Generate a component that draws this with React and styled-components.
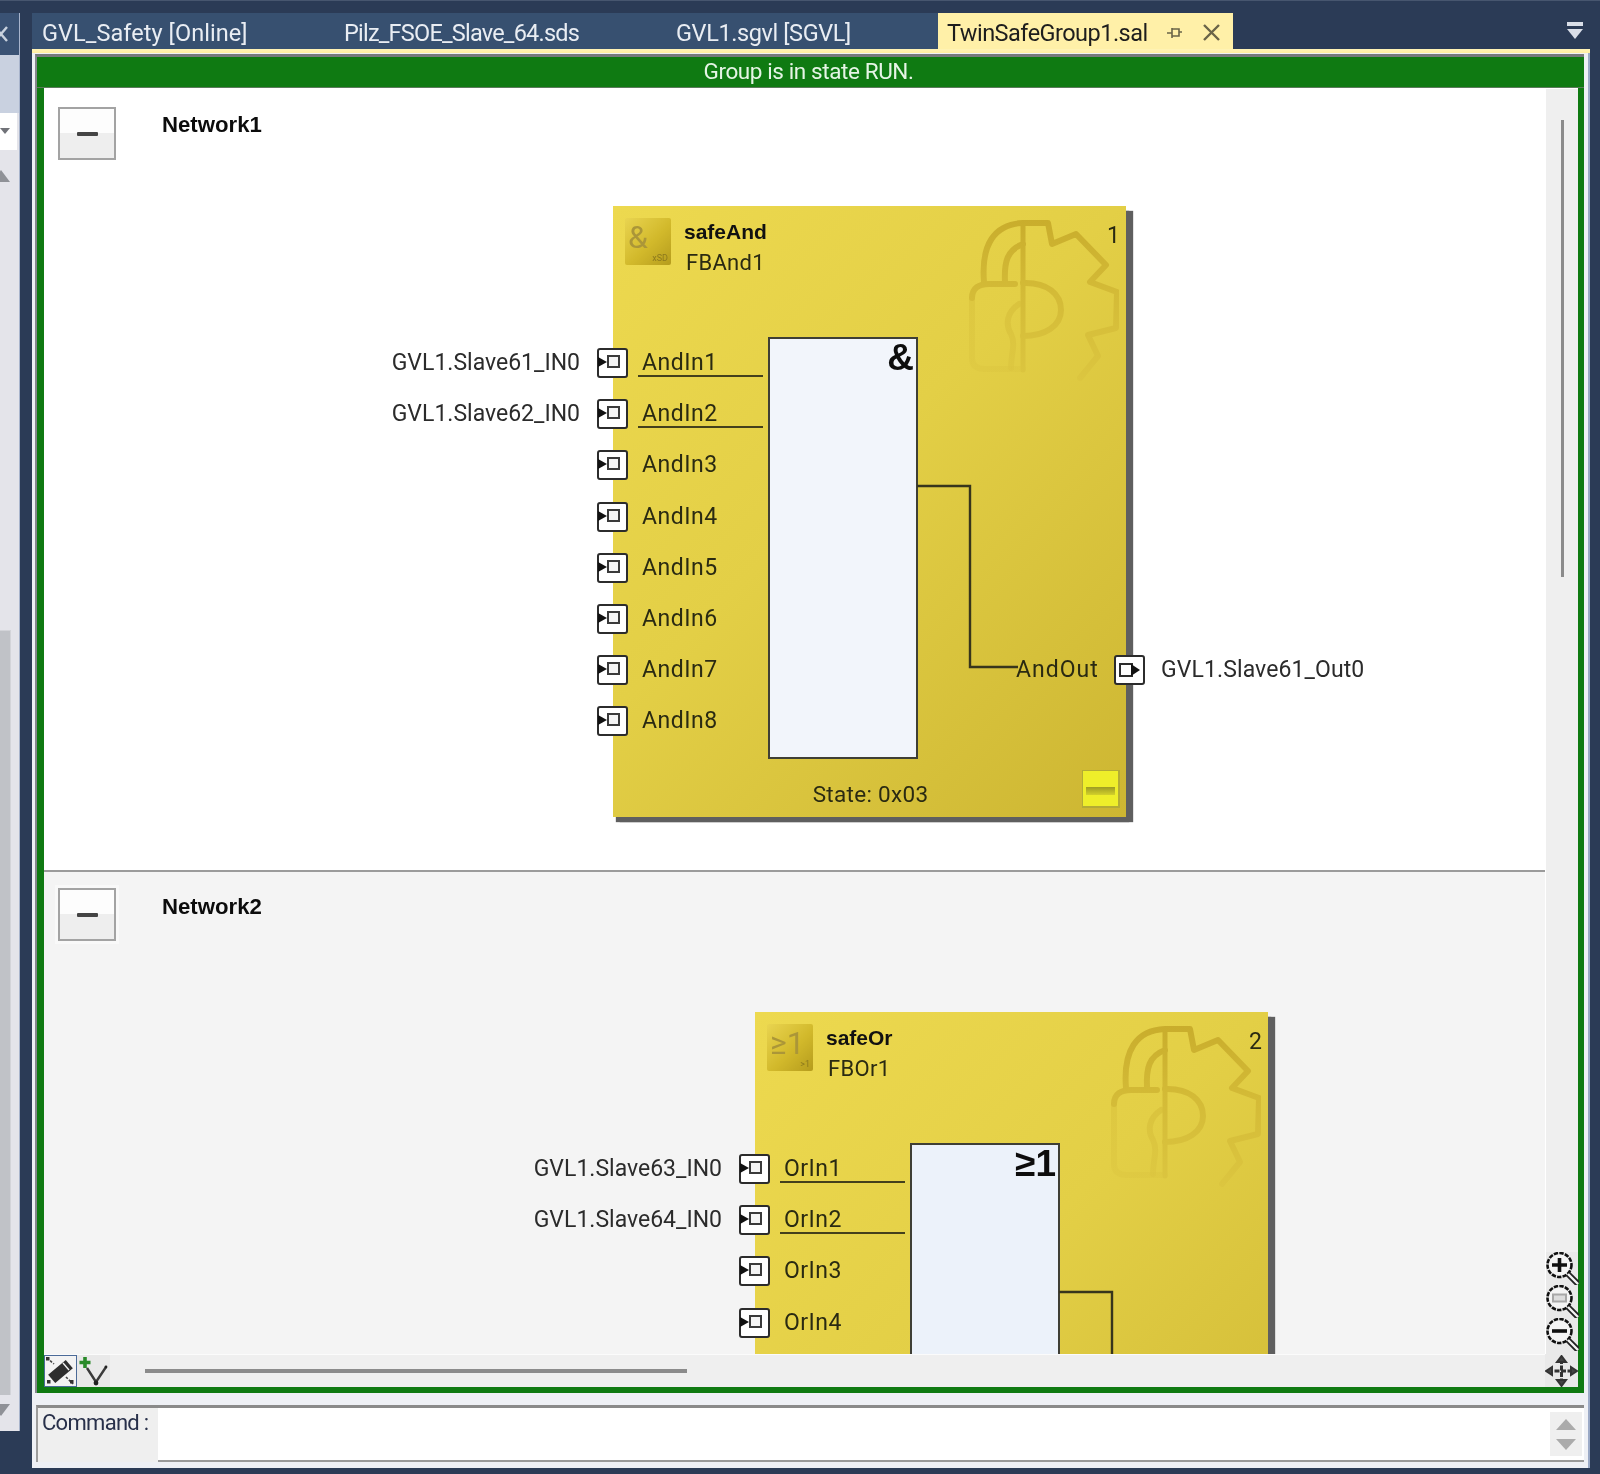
import React from 'react';
import styled, { createGlobalStyle } from 'styled-components';

const GlobalStyle = createGlobalStyle`
  html, body {
    margin: 0;
    padding: 0;
    background: #2b3b56;
  }
  body {
    font-family: Roboto, "Liberation Sans", sans-serif;
  }
`;

const Page = styled.div`
  width: 1600px;
  height: 1474px;
  overflow: hidden;
  background: #2b3b56;
  padding: 12px 10px 6px 0;
  box-sizing: border-box;
  display: grid;
  grid-template-columns: 20px 1fr;
  column-gap: 12px;
  border-top: 1px solid #47566f;
  filter: blur(0.55px);
`;

/* left tool window, only a sliver of it is visible */
const Sidebar = styled.aside`
  height: 1418px;
  display: flex;
  flex-direction: column;
  background: #e4e4ea;
  border-right: 1px solid #a8b4cc;
  box-sizing: border-box;
  overflow: hidden;
`;

const SidebarHead = styled.div`
  height: 42px;
  flex: none;
  background: #3a5274;
  display: flex;
  align-items: center;
`;

const SidebarUpper = styled.div`
  height: 58px;
  flex: none;
  background: #c9d1e0;
`;

const SidebarCombo = styled.div`
  margin-right: 2px;
  height: 37px;
  flex: none;
  background: #fff;
  padding-top: 15px;
  box-sizing: border-box;
`;

const Arrow = styled.div`
  width: 0;
  height: 0;
  flex: none;
  margin: ${(p) => p.$margin || '0'};
  border-left: ${(p) => p.$w}px solid transparent;
  border-right: ${(p) => p.$w}px solid transparent;
  ${(p) => (p.$down ? `border-top: ${p.$h}px solid ${p.$color};` : `border-bottom: ${p.$h}px solid ${p.$color};`)}
`;

const SidebarTrack = styled.div`
  flex: 1;
  width: 10px;
  margin-top: 448px;
  background: #c0c2c7;
  border: solid #d3d4d9;
  border-width: 1px 1px 0 0;
  box-sizing: content-box;
`;

const Main = styled.main`
  display: flex;
  flex-direction: column;
  min-width: 0;
`;

const TabBar = styled.div`
  height: 36px;
  display: flex;
  align-items: stretch;
  position: relative;
`;

const Tab = styled.div`
  width: ${(p) => p.$width}px;
  box-sizing: border-box;
  padding: 3px 0 0 ${(p) => (p.$active ? 9 : 10)}px;
  display: flex;
  align-items: center;
  font-size: 23.5px;
  letter-spacing: ${(p) => p.$tracking}px;
  white-space: nowrap;
  color: ${(p) => (p.$active ? '#1d1d1d' : '#e9edf3')};
  background: ${(p) => (p.$active ? '#fff0a8' : '#375070')};
`;

const TabIcons = styled.span`
  display: inline-flex;
  align-items: center;
  margin-left: 19px;
  gap: 19px;
`;

const OverflowButton = styled.svg`
  position: absolute;
  right: 7px;
  top: 9px;
`;

const TabLine = styled.div`
  height: 4px;
  background: linear-gradient(#fff3b8, #ffeea0);
`;

const EditorPanel = styled.div`
  height: 1415px;
  background: #eef0f5;
  border-right: 2px solid #9aa9c6;
  padding: 1px 4px 0 3px;
  box-sizing: border-box;
  display: flex;
  flex-direction: column;
`;

const GroupFrame = styled.div`
  height: 1339px;
  flex: none;
  box-sizing: border-box;
  border-top: 3px solid #77797c;
  border-left: 2px solid #84878d;
  display: flex;
  flex-direction: column;
`;

const StateBar = styled.div`
  height: 31px;
  flex: none;
  background: #0f7a12;
  border-bottom: 1px solid #5c7a5c;
  box-sizing: border-box;
  color: #e6f5e6;
  font-size: 22.5px;
  letter-spacing: -0.4px;
  line-height: 29px;
  text-align: center;
  padding-right: 4px;
`;

const GroupBody = styled.div`
  flex: 1;
  min-height: 0;
  border: solid #0f7a12;
  border-width: 0 6px 6px 7px;
  display: grid;
  grid-template-columns: 1fr 33px;
  grid-template-rows: 1fr 33px;
  background: #efefef;
`;

const Networks = styled.div`
  overflow: hidden;
  display: flex;
  flex-direction: column;
  min-height: 0;
`;

const Network = styled.section`
  position: relative;
  flex: ${(p) => (p.$grow ? '1' : 'none')};
  height: ${(p) => (p.$height ? `${p.$height}px` : 'auto')};
  background: ${(p) => p.$bg};
  border-bottom: ${(p) => (p.$divider ? '2px solid #9b9b9b' : 'none')};
  box-sizing: border-box;
  overflow: hidden;
  display: flex;
  align-items: flex-start;
  gap: 46px;
  padding: ${(p) => p.$pad};
`;

const CollapseButton = styled.div`
  width: 58px;
  height: 53px;
  box-sizing: border-box;
  border: 2px solid #a3a3a3;
  outline: 3px solid ${(p) => (p.$halo ? '#f9f9f9' : 'transparent')};
  background: linear-gradient(#fdfdfd 0 50%, #eeeeee 50% 100%);
  display: flex;
  align-items: center;
  justify-content: center;

  &::before {
    content: '';
    width: 21px;
    height: 4px;
    border-radius: 1px;
    background: #444;
  }
`;

const NetworkTitle = styled.div`
  font-family: "Liberation Sans", sans-serif;
  font-weight: 700;
  font-size: 22.2px;
  line-height: 26px;
  color: #0c0c0c;
  margin-top: ${(p) => p.$offset}px;
`;

/* function blocks sit on the network canvas at their own coordinates */
const Block = styled.div`
  position: absolute;
  left: ${(p) => p.$x}px;
  top: ${(p) => p.$y}px;
  width: 513px;
  height: 611px;
  background: linear-gradient(135deg, #edd94f 0%, #e3cf46 45%, #cdb632 100%);
  box-shadow: 7px 5px 1px 0 #5f5f5f, 3px 5px 1px 0 #5f5f5f;
  color: #2a2a12;
`;

const Watermark = styled.svg`
  position: absolute;
  left: 356px;
  top: 14px;
`;

const BlockHead = styled.header`
  height: 131px;
  box-sizing: border-box;
  padding: 12px 0 0 12px;
  display: flex;
  gap: 13px;
`;

const TypeTile = styled.div`
  width: 46px;
  height: 47px;
  border-radius: 2px;
  background: linear-gradient(135deg, #e9d450 0%, #d2b92b 55%, #b59c1d 100%);
  color: #ab9638;
  padding: 4px 0 0 3px;
  box-sizing: border-box;
  position: relative;
`;

const TileGlyph = styled.div`
  font-size: 32px;
  line-height: 30px;
  height: 30px;
`;

const TileMark = styled.span`
  position: absolute;
  right: 3px;
  bottom: 2px;
  font-size: 9px;
  line-height: 10px;
  color: #8d7a1e;
`;

const BlockNames = styled.div`
  display: flex;
  flex-direction: column;
`;

const TypeName = styled.div`
  font-family: "Liberation Sans", sans-serif;
  font-weight: 700;
  font-size: 21px;
  line-height: 28px;
  color: #111;
`;

const InstanceName = styled.div`
  font-size: 22px;
  line-height: 28px;
  margin: 3px 0 0 2px;
  letter-spacing: 0.3px;
`;

const BlockIndex = styled.div`
  position: absolute;
  right: 6px;
  top: 16px;
  font-size: 23px;
  line-height: 28px;
`;

const BlockBody = styled.div`
  display: flex;
  align-items: flex-start;
  height: 422px;
`;

const Inputs = styled.div`
  width: 155px;
  flex: none;
  display: flex;
  flex-direction: column;
`;

const InputRow = styled.div`
  position: relative;
  height: 51.2px;
  box-sizing: border-box;
  padding-left: 29px;
  font-size: 23px;
  letter-spacing: 0.5px;
  line-height: 52px;

  ${(p) => p.$wired && `
    &::after {
      content: '';
      position: absolute;
      left: 25px;
      right: 5px;
      bottom: 11px;
      height: 2.4px;
      background: #44401c;
    }
  `}
`;

const PinHolder = styled.span`
  position: absolute;
  left: ${(p) => p.$left}px;
  top: ${(p) => p.$top}px;
  display: block;
  line-height: 0;
`;

const OuterLabel = styled.span`
  position: absolute;
  right: 188px;
  top: 0;
  white-space: nowrap;
  letter-spacing: 0;
  color: #2b2b2b;
`;

const FunctionBox = styled.div`
  width: 150px;
  height: 422px;
  flex: none;
  box-sizing: border-box;
  border: 2px solid #3f3f35;
  background: ${(p) => p.$fill};
  text-align: right;
  padding-right: 2px;
  font-family: "Liberation Sans", sans-serif;
  font-weight: 700;
  font-size: 37px;
  line-height: 38px;
  color: #0d0d0d;
`;

const Wire = styled.svg`
  position: absolute;
  left: 0;
  top: 0;
  pointer-events: none;
`;

const OutputRow = styled.div`
  position: absolute;
  left: 403px;
  top: 439px;
  font-size: 23px;
  letter-spacing: 1px;
  line-height: 50px;
  white-space: nowrap;
`;

const OutputLabel = styled.span`
  position: absolute;
  left: 145px;
  top: 0;
  letter-spacing: 0.1px;
  color: #2b2b2b;
`;

const BlockFooter = styled.div`
  margin-top: 20px;
  text-align: center;
  font-size: 22.5px;
  letter-spacing: 0.3px;
  line-height: 30px;
  padding-left: 2px;
`;

const StatusLamp = styled.div`
  position: absolute;
  right: 6px;
  bottom: 9px;
  width: 38px;
  height: 38px;
  box-sizing: border-box;
  border: 1px solid #b3ab35;
  border-width: 1px 2px 2px 1px;
  background: #eeee2a;

  &::after {
    content: '';
    position: absolute;
    left: 3px;
    right: 3px;
    top: 16px;
    height: 8px;
    background: linear-gradient(#9d9b24, #d3d12a);
  }
`;

const VerticalBar = styled.div`
  background: #efefef;
  border-top: 1px solid #fff;
  border-left: 1px solid #fff;
  display: flex;
  flex-direction: column;
  align-items: center;
  box-sizing: border-box;
`;

const ScrollThumb = styled.div`
  width: 3px;
  height: 457px;
  margin-top: 31px;
  background: #8b8b8b;
`;

const ZoomTools = styled.div`
  margin-top: auto;
  width: 100%;
  height: 102px;
  background: #e9e9e9;
  display: flex;
  flex-direction: column;
  align-items: center;
`;

const HorizontalBar = styled.div`
  background: #efefef;
  border-top: 1px solid #fbfbfb;
  display: flex;
  align-items: center;
`;

const ModeButton = styled.div`
  width: ${(p) => p.$width}px;
  height: 32px;
  flex: none;
  box-sizing: border-box;
  line-height: 0;
  background: ${(p) => (p.$selected ? '#f3f3f3' : '#e9e9e9')};
  border: ${(p) => (p.$selected ? '1px solid #4b6a98' : 'none')};
`;

const HScrollThumb = styled.div`
  width: 542px;
  height: 4px;
  margin-left: 35px;
  background: #8b8b8b;
`;

const Corner = styled.div`
  background: #e9e9e9;
  display: flex;
  align-items: center;
  justify-content: center;
`;

const CommandBox = styled.div`
  margin-top: 12px;
  height: 57px;
  flex: none;
  display: flex;
  box-sizing: border-box;
  border-top: 3px solid #8a8a8a;
  border-left: 2px solid #9c9c9c;
  margin-left: 1px;
`;

const CommandLabel = styled.label`
  width: 120px;
  flex: none;
  padding: 0 0 0 4px;
  box-sizing: border-box;
  font-size: 22px;
  letter-spacing: -0.7px;
  line-height: 29px;
  color: #28304a;
  background: #efefef;
`;

const CommandInput = styled.div`
  flex: 1;
  background: #fff;
  border-bottom: 2px solid #999;
  display: flex;
  justify-content: flex-end;
  align-items: stretch;
  padding: 4px 2px 4px 0;
`;

const CommandScroll = styled.div`
  width: 32px;
  background: #efefef;
  display: flex;
  flex-direction: column;
  align-items: center;
  justify-content: center;
  gap: 9px;
`;

const PinIn = () => (
  <svg width="31" height="30" viewBox="0 0 31 30">
    <rect x="1" y="1" width="29" height="28" rx="2" fill="#fff" stroke="#2c2c2c" strokeWidth="2" />
    <rect x="11" y="8" width="11" height="11" fill="#f4f4f4" stroke="#3a3a3a" strokeWidth="2" />
    <path d="M1 9 L10 14 L1 19 Z" fill="#111" />
  </svg>
);

const PinOut = () => (
  <svg width="31" height="30" viewBox="0 0 31 30">
    <rect x="1" y="1" width="29" height="28" rx="2" fill="#fff" stroke="#2c2c2c" strokeWidth="2" />
    <path d="M6 9 H18 V21 H6 Z" fill="#fff" stroke="#2c2c2c" strokeWidth="2" />
    <path d="M17 9 L26 15 L17 21 Z" fill="#111" />
  </svg>
);

const LockGear = () => (
  <Watermark width="150" height="164" viewBox="0 0 150 164">
    <defs>
      <linearGradient id="markFade" gradientUnits="userSpaceOnUse" x1="0" y1="0" x2="0" y2="164">
        <stop offset="0" stopColor="#c9ad2c" />
        <stop offset="0.45" stopColor="#d4bb37" />
        <stop offset="1" stopColor="#dcc640" />
      </linearGradient>
    </defs>
    <g fill="none" stroke="url(#markFade)" strokeWidth="6" strokeLinejoin="round" strokeLinecap="round">
      <path d="M15 62 C12 25 25 4 54 3 L79 3 L83 24 L107 14 L137 45 L121 62 L148 72 L147 108 L119 115 L129 136 L111 158" />
      <path d="M36 62 C35 42 38 30 54 24" />
      <path d="M54 3 V150" strokeWidth="5" />
      <path d="M3 78 C3 68 10 64 20 64 L46 64" />
      <path d="M3 78 V138 C3 146 8 149 16 149 L54 149" opacity="0.4" />
      <path d="M54 63 C78 62 92 74 92 90 C92 106 76 116 54 116" />
      <path d="M50 84 C38 92 36 104 42 114 C47 124 42 134 42 148" opacity="0.6" />
    </g>
  </Watermark>
);

const ZoomIcon = ({ kind }) => (
  <svg width="33" height="33" viewBox="0 0 33 33">
    <circle cx="13.5" cy="13" r="12" fill="#f4f4f4" stroke="#111" strokeWidth="2.6" strokeDasharray="4.4 1.2" />
    <path d="M22 22 L32 32" stroke="#222" strokeWidth="6" />
    <path d="M22 22 L32 32" stroke="#f4f4f4" strokeWidth="2.4" />
    {kind === 'in' && <path d="M6 13 H21 M13.5 6 V20" stroke="#111" strokeWidth="3.6" />}
    {kind === 'fit' && <rect x="7" y="9.5" width="13" height="7" fill="#ddd" stroke="#a8a8a8" strokeWidth="2" />}
    {kind === 'out' && <path d="M6 13 H21" stroke="#111" strokeWidth="3.6" />}
  </svg>
);

const MoveIcon = () => (
  <svg width="33" height="32" viewBox="0 0 33 32">
    <g stroke="#333" strokeWidth="2" fill="#444">
      <path d="M16.5 4 V28 M3 16 H30" fill="none" strokeWidth="3" strokeDasharray="5 1.5" />
      <path d="M16.5 1 L12 7 H21 Z" />
      <path d="M16.5 31 L12 25 H21 Z" />
      <path d="M1 16 L7 12 V20 Z" />
      <path d="M32 16 L26 12 V20 Z" />
    </g>
  </svg>
);

const EditModeIcon = () => (
  <svg width="31" height="30" viewBox="0 0 31 30">
    <rect x="4" y="10" width="23" height="11" transform="rotate(-40 15.5 15.5)" fill="#2e2e2e" />
    <path d="M18 7 L24 14" stroke="#f3f3f3" strokeWidth="1.4" />
    <path d="M2 2 L9 8 M21 21 L28 28" stroke="#444" strokeWidth="1.6" strokeDasharray="2.5 1.6" />
    <rect x="1" y="1" width="3.5" height="3.5" fill="#333" />
    <rect x="25" y="24" width="3.5" height="3.5" fill="#333" />
    <rect x="2" y="24" width="3.5" height="3.5" fill="#333" />
  </svg>
);

const AddConnectionIcon = () => (
  <svg width="33" height="32" viewBox="0 0 33 32">
    <path d="M8 2 V13 M2.5 7.5 H13.5" stroke="#2a8a2a" strokeWidth="3.6" />
    <path d="M10 13 L19 27 L29 12" fill="none" stroke="#3a3a3a" strokeWidth="2.4" />
    <circle cx="19" cy="28" r="2.4" fill="#222" />
    <circle cx="29" cy="12" r="1.4" fill="#222" />
  </svg>
);

const CloseSliver = () => (
  <svg width="8" height="18" viewBox="0 0 8 18">
    <path d="M-5 2 L7 16 M7 2 L-5 16" stroke="#c9d2df" strokeWidth="2.4" />
  </svg>
);

const FunctionBlock = ({ x, y, type, instance, tile, mark, symbol, index, fill, inputs, output }) => (
  <Block $x={x} $y={y}>
    <LockGear />
    <BlockHead>
      <TypeTile>
        <TileGlyph>{tile}</TileGlyph>
        <TileMark>{mark}</TileMark>
      </TypeTile>
      <BlockNames>
        <TypeName>{type}</TypeName>
        <InstanceName>{instance}</InstanceName>
      </BlockNames>
    </BlockHead>
    <BlockIndex>{index}</BlockIndex>
    <BlockBody>
      <Inputs>
        {inputs.map((input) => (
          <InputRow key={input.name} $wired={!!input.variable}>
            <PinHolder $left={-16} $top={11}><PinIn /></PinHolder>
            {input.variable && <OuterLabel>{input.variable}</OuterLabel>}
            {input.name}
          </InputRow>
        ))}
      </Inputs>
      <FunctionBox $fill={fill}>{symbol}</FunctionBox>
    </BlockBody>
    <Wire width="513" height="611">
      <path d="M304 280 H357 V461 H405" fill="none" stroke="#37351c" strokeWidth="2.4" />
    </Wire>
    {output && (
      <OutputRow>
        {output.name}
        <PinHolder $left={98} $top={10}><PinOut /></PinHolder>
        <OutputLabel>{output.variable}</OutputLabel>
      </OutputRow>
    )}
    {output && <BlockFooter>State: 0x03</BlockFooter>}
    <StatusLamp />
  </Block>
);

const tabs = [
  { label: 'GVL_Safety [Online]', width: 302, tracking: 0.06 },
  { label: 'Pilz_FSOE_Slave_64.sds', width: 332, tracking: -0.78 },
  { label: 'GVL1.sgvl [SGVL]', width: 272, tracking: -0.4 },
];

const andInputs = [
  { name: 'AndIn1', variable: 'GVL1.Slave61_IN0' },
  { name: 'AndIn2', variable: 'GVL1.Slave62_IN0' },
  { name: 'AndIn3' },
  { name: 'AndIn4' },
  { name: 'AndIn5' },
  { name: 'AndIn6' },
  { name: 'AndIn7' },
  { name: 'AndIn8' },
];

const orInputs = [
  { name: 'OrIn1', variable: 'GVL1.Slave63_IN0' },
  { name: 'OrIn2', variable: 'GVL1.Slave64_IN0' },
  { name: 'OrIn3' },
  { name: 'OrIn4' },
];

const App = () => (
  <>
    <GlobalStyle />
    <Page>
      <Sidebar>
        <SidebarHead><CloseSliver /></SidebarHead>
        <SidebarUpper />
        <SidebarCombo>
          <Arrow $down $w={5} $h={6} $color="#707278" />
        </SidebarCombo>
        <Arrow $w={9} $h={12} $color="#8f9197" $margin="20px 0 0 -8px" />
        <SidebarTrack />
        <Arrow $down $w={9} $h={12} $color="#8f9197" $margin="9px 0 15px -8px" />
      </Sidebar>
      <Main>
        <TabBar>
          {tabs.map((tab) => (
            <Tab key={tab.label} $width={tab.width} $tracking={tab.tracking}>{tab.label}</Tab>
          ))}
          <Tab $active $width={295} $tracking={-0.53}>
            TwinSafeGroup1.sal
            <TabIcons>
              <svg width="16" height="16" viewBox="0 0 16 16">
                <path d="M0 8 H5 M5 3 V13 M5 4 H12 V11 H5 M12 4 V7 H15" fill="none" stroke="#6a6448" strokeWidth="1.6" />
              </svg>
              <svg width="19" height="19" viewBox="0 0 19 19">
                <path d="M2 2 L17 17 M17 2 L2 17" stroke="#6a6448" strokeWidth="2.4" />
              </svg>
            </TabIcons>
          </Tab>
          <OverflowButton width="16" height="18" viewBox="0 0 16 18">
            <rect x="0" y="0" width="16" height="4" fill="#d9dee8" />
            <path d="M0 7 H16 L8 17 Z" fill="#d9dee8" />
          </OverflowButton>
        </TabBar>
        <TabLine />
        <EditorPanel>
          <GroupFrame>
            <StateBar>Group is in state RUN.</StateBar>
            <GroupBody>
              <Networks>
                <Network $height={784} $bg="#ffffff" $divider $pad="19px 0 0 14px">
                  <CollapseButton />
                  <NetworkTitle $offset={5}>Network1</NetworkTitle>
                  <FunctionBlock
                    x={569}
                    y={118}
                    type="safeAnd"
                    instance="FBAnd1"
                    tile="&"
                    mark="xSD"
                    symbol="&"
                    index="1"
                    fill="#f2f5fb"
                    inputs={andInputs}
                    output={{ name: 'AndOut', variable: 'GVL1.Slave61_Out0' }}
                  />
                </Network>
                <Network $grow $bg="#f4f4f4" $pad="16px 0 0 14px">
                  <CollapseButton $halo />
                  <NetworkTitle $offset={6}>Network2</NetworkTitle>
                  <FunctionBlock
                    x={711}
                    y={140}
                    type="safeOr"
                    instance="FBOr1"
                    tile="≥1"
                    mark=">1"
                    symbol="≥1"
                    index="2"
                    fill="#ecf2fa"
                    inputs={orInputs}
                  />
                </Network>
              </Networks>
              <VerticalBar>
                <ScrollThumb />
                <ZoomTools>
                  <ZoomIcon kind="in" />
                  <ZoomIcon kind="fit" />
                  <ZoomIcon kind="out" />
                </ZoomTools>
              </VerticalBar>
              <HorizontalBar>
                <ModeButton $selected $width={33}><EditModeIcon /></ModeButton>
                <ModeButton $width={33}><AddConnectionIcon /></ModeButton>
                <HScrollThumb />
              </HorizontalBar>
              <Corner><MoveIcon /></Corner>
            </GroupBody>
          </GroupFrame>
          <CommandBox>
            <CommandLabel>Command :</CommandLabel>
            <CommandInput>
              <CommandScroll>
                <Arrow $w={10} $h={11} $color="#ababab" />
                <Arrow $down $w={10} $h={11} $color="#ababab" />
              </CommandScroll>
            </CommandInput>
          </CommandBox>
        </EditorPanel>
      </Main>
    </Page>
  </>
);

export default App;
